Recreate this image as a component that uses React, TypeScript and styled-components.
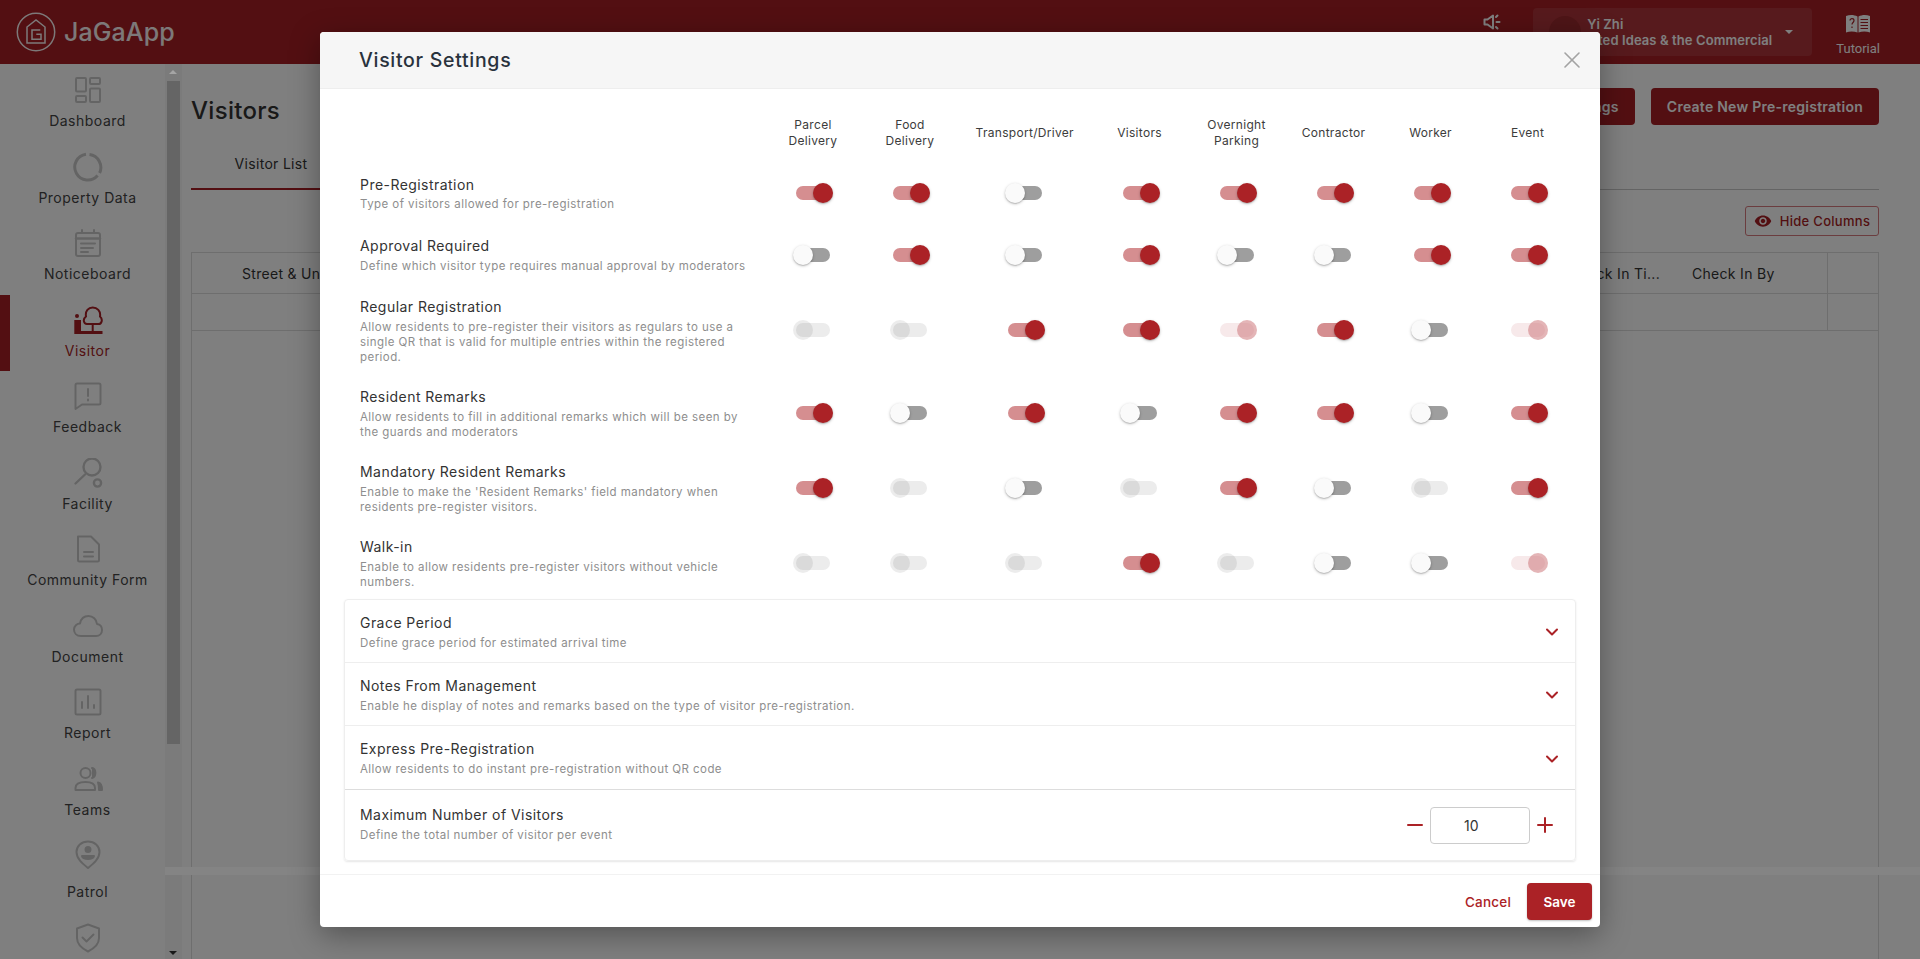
import React from "react";
import styled, { createGlobalStyle } from "styled-components";
import { ChevronDown, X, Minus, Plus } from "lucide-react";
import { MdVisibility } from "react-icons/md";

const GlobalStyle = createGlobalStyle`
  html, body {
    margin: 0;
    height: 100%;
    overflow: hidden;
    background: #fff;
    font-family: "Inter", "Liberation Sans", sans-serif;
  }
  * { box-sizing: border-box; }
`;

const Page = styled.div`
  position: relative;
  width: 1920px;
  height: 959px;
  overflow: hidden;
  display: flex;
  flex-direction: column;
`;

const Header = styled.header`
  height: 64px;
  flex: none;
  background: #a61e24;
  display: flex;
  align-items: center;
  padding: 0 40px 0 16px;
`;

const Logo = styled.div`
  display: flex;
  align-items: center;
  gap: 8px;
  font-size: 25px;
  font-weight: 500;
  color: #fff;
  letter-spacing: 0.1px;
  flex: 1;
  opacity: 0.95;
`;

const Speaker = styled.div`
  margin-right: 32px;
  margin-bottom: 20px;
  display: flex;
  color: #fff;
`;

const UserBox = styled.div`
  width: 279px;
  height: 48px;
  margin-right: 24px;
  border-radius: 4px;
  background: rgba(255, 255, 255, 0.1);
  display: flex;
  align-items: center;
  padding: 0 16px;
  color: #fff;
`;

const Avatar = styled.div`
  width: 32px;
  height: 32px;
  border-radius: 50%;
  background: #9c2a2e;
  flex: none;
`;

const UserText = styled.div`
  margin-left: 6px;
  width: 185px;
  font-size: 13px;
  line-height: 16px;
  font-weight: 600;
  letter-spacing: 0.1px;
`;

const OrgLine = styled.div`
  white-space: nowrap;
  display: flex;
  justify-content: flex-end;
`;

const Caret = styled.div`
  margin-left: 13px;
  width: 0;
  height: 0;
  border-left: 4px solid transparent;
  border-right: 4px solid transparent;
  border-top: 4px solid #fff;
`;

const TutorialBox = styled.div`
  display: flex;
  flex-direction: column;
  align-items: center;
  gap: 7px;
  margin-top: 6px;
  color: #fff;
  font-size: 13px;
  line-height: 15px;
  font-family: "Roboto", sans-serif;
`;

const Body = styled.div`
  flex: 1;
  display: flex;
  min-height: 0;
`;

const Sidebar = styled.nav`
  width: 165px;
  flex: none;
  overflow: hidden;
  display: flex;
  flex-direction: column;
  padding: 11px 0 0 10px;
`;

const NavItem = styled.div<{ $active?: boolean; $tall?: boolean }>`
  position: relative;
  height: ${(p) => (p.$tall ? "83px" : "76.5px")};
  flex: none;
  display: flex;
  flex-direction: column;
  align-items: center;
  justify-content: flex-start;
  color: ${(p) => (p.$active ? "#a61e24" : "#444")};
  font-size: 14px;
  line-height: 18px;
  letter-spacing: 0.5px;
  white-space: nowrap;

  svg {
    color: ${(p) => (p.$active ? "#a61e24" : "#c9c9c9")};
    flex: none;
    margin-bottom: ${(p) => (p.$tall ? "13px" : "7px")};
  }

  ${(p) =>
    p.$active &&
    `&::before {
      content: "";
      position: absolute;
      left: -10px;
      top: -10px;
      width: 10px;
      height: 76px;
      background: #a61e24;
    }`}
`;

const Scrollbar = styled.div`
  position: relative;
  width: 17px;
  flex: none;
  background: #f7f7f7;
`;

const ScrollThumb = styled.div`
  margin: 17px 2px 0;
  height: 663px;
  background: #cacaca;
`;

const ArrowUp = styled.div`
  position: absolute;
  z-index: 1;
  top: 6px;
  left: 4px;
  border-left: 4px solid transparent;
  border-right: 4px solid transparent;
  border-bottom: 4px solid #a5a5a5;
`;

const ArrowDown = styled.div`
  position: absolute;
  bottom: 4px;
  left: 4px;
  border-left: 4px solid transparent;
  border-right: 4px solid transparent;
  border-top: 4px solid #333;
`;

const Main = styled.main`
  flex: 1;
  position: relative;
  padding: 24px 41px 0 9px;
  display: flex;
  flex-direction: column;
`;

const TitleRow = styled.div`
  display: flex;
  align-items: flex-start;
  height: 53px;
  flex: none;
  gap: 16px;
`;

const PageTitle = styled.h1`
  margin: 5px auto 0 0;
  font-size: 24px;
  line-height: 36px;
  font-weight: 500;
  color: #333;
  letter-spacing: 0.3px;
`;

const PrimaryButton = styled.button`
  height: 37px;
  border: 0;
  border-radius: 4px;
  background: #a61e24;
  color: #fff;
  font: 600 14px "Inter", sans-serif;
  letter-spacing: 0.25px;
  padding: 0 16px;
`;

const Tabs = styled.div`
  height: 49px;
  flex: none;
  display: flex;
  border-bottom: 1px solid #c8c8c8;
`;

const Tab = styled.div`
  width: 160px;
  height: 49px;
  padding-top: 14px;
  text-align: center;
  font-size: 14px;
  line-height: 18px;
  letter-spacing: 0.3px;
  color: #333;
  border-bottom: 2px solid #a61e24;
`;

const TableTools = styled.div`
  height: 62px;
  flex: none;
  padding-top: 16px;
  display: flex;
  justify-content: flex-end;
`;

const HideColumns = styled.button`
  width: 134px;
  height: 30px;
  border: 1px solid #d77a7e;
  border-radius: 3px;
  background: transparent;
  color: #a61e24;
  font: 500 13px "Inter", sans-serif;
  letter-spacing: 0.3px;
  display: flex;
  align-items: center;
  justify-content: center;
  gap: 8px;
  padding: 0;
`;

const Table = styled.div`
  flex: 1;
  border: 1px solid #dcdcdc;
  border-bottom: 0;
  display: flex;
  flex-direction: column;
`;

const TableHead = styled.div`
  height: 41px;
  flex: none;
  display: flex;
  align-items: center;
  border-bottom: 1px solid #dcdcdc;
  font-size: 14px;
  letter-spacing: 0.3px;
  color: #333;
`;

const HeadCell = styled.div<{ $width: number }>`
  flex: none;
  width: ${(p) => p.$width}px;
  padding-left: 50px;
  white-space: nowrap;
`;

const TableEnd = styled.div`
  margin-left: auto;
  width: 51px;
  height: 100%;
  border-left: 1px solid #dcdcdc;
`;

const TableEmpty = styled.div`
  height: 37px;
  flex: none;
  border-bottom: 1px solid #dcdcdc;
  display: flex;
  justify-content: flex-end;
`;

const Overlay = styled.div`
  position: absolute;
  inset: 0;
  background: rgba(0, 0, 0, 0.5);
`;

const ScrollBand = styled.div`
  position: absolute;
  left: 165px;
  right: 0;
  bottom: 84px;
  height: 8px;
  background: #848484;
`;

const Modal = styled.section`
  position: absolute;
  left: 320px;
  top: 32px;
  width: 1280px;
  height: 895px;
  background: #fff;
  border-radius: 4px;
  display: flex;
  flex-direction: column;
  overflow: hidden;
  box-shadow: 0 8px 30px rgba(0, 0, 0, 0.35);
  color: #333;
`;

const ModalHeader = styled.div`
  height: 57px;
  flex: none;
  background: #f6f6f6;
  border-bottom: 1px solid #eee;
  display: flex;
  align-items: center;
  justify-content: space-between;
  padding: 0 14px 0 39px;
  color: #a3a3a3;
`;

const ModalTitle = styled.h2`
  margin: 0;
  font-size: 19.5px;
  font-weight: 500;
  letter-spacing: 0.7px;
  color: #29323d;
`;

const ModalBody = styled.div`
  flex: 1;
  padding: 28px 24px 0;
  min-height: 0;
`;

const Grid = styled.div`
  display: grid;
  grid-template-columns: 404.5px 97px 97px 132.5px repeat(5, 97px);
  align-items: center;
  padding-left: 16px;
`;

const HeaderGrid = styled(Grid)`
  height: 45.5px;
  padding-bottom: 13.5px;
`;

const ColName = styled.div`
  font-size: 12px;
  line-height: 16px;
  text-align: center;
  letter-spacing: 0.3px;
  color: #3c3c3c;
  white-space: pre-line;
`;

const Row = styled(Grid)`
  min-height: 61.5px;
  padding-top: 11.5px;
  padding-bottom: 11px;
`;

const Title = styled.div`
  font-size: 14px;
  line-height: 20px;
  letter-spacing: 0.45px;
  color: #333;
`;

const Desc = styled.div<{ $wide?: boolean }>`
  margin-top: ${(p) => (p.$wide ? "3px" : "2.5px")};
  max-width: ${(p) => (p.$wide ? "none" : "392px")};
  font-size: 11.5px;
  line-height: 15px;
  letter-spacing: 0.44px;
  color: #8e8e8e;
`;

const Cell = styled.div`
  display: flex;
  justify-content: center;
  margin-top: -1px;
`;

type SwitchState = "on" | "off" | "onDisabled" | "offDisabled";

const trackColors: Record<SwitchState, string> = {
  on: "#d58e90",
  off: "#9e9e9e",
  onDisabled: "#f7e9ea",
  offDisabled: "#ececec",
};

const thumbColors: Record<SwitchState, string> = {
  on: "#ab2226",
  off: "#fafafa",
  onDisabled: "rgba(205, 120, 124, 0.55)",
  offDisabled: "rgba(0, 0, 0, 0.075)",
};

const Track = styled.div<{ $state: SwitchState }>`
  position: relative;
  width: 34px;
  height: 14px;
  border-radius: 7px;
  background: ${(p) => trackColors[p.$state]};
`;

const Thumb = styled.div<{ $state: SwitchState }>`
  position: absolute;
  top: -3px;
  left: ${(p) => (p.$state === "on" || p.$state === "onDisabled" ? "17px" : "-3px")};
  width: 20px;
  height: 20px;
  border-radius: 50%;
  background: ${(p) => thumbColors[p.$state]};
  box-shadow: ${(p) =>
    p.$state === "on" || p.$state === "off"
      ? "0 1px 3px rgba(0, 0, 0, 0.25), 0 1px 1px rgba(0, 0, 0, 0.12)"
      : "none"};
`;

const Card = styled.div`
  margin-top: -1.5px;
  border: 1px solid #eee;
  border-radius: 4px;
  box-shadow: 0 1px 2px rgba(0, 0, 0, 0.1);
  display: flex;
  flex-direction: column;
`;

const Accordion = styled.div<{ $last?: boolean }>`
  height: ${(p) => (p.$last ? "64px" : "63px")};
  flex: none;
  padding: 0 13px 0 15px;
  display: flex;
  align-items: center;
  justify-content: space-between;
  border-bottom: 1px solid ${(p) => (p.$last ? "#ddd" : "#eee")};
  color: #ab2226;

  svg {
    margin-top: 2px;
  }
`;

const AccordionText = styled.div`
  align-self: flex-start;
  padding-top: 13px;
`;

const MaxRow = styled.div`
  height: 70px;
  flex: none;
  padding: 0 18px 0 15px;
  display: flex;
  align-items: center;
  justify-content: space-between;
`;

const MaxText = styled.div`
  margin-top: -2px;
`;

const Stepper = styled.div`
  display: flex;
  align-items: center;
  gap: 3px;
  color: #ab2226;
`;

const NumberBox = styled.div`
  width: 100px;
  height: 37px;
  border: 1px solid #ccc;
  border-radius: 4px;
  display: flex;
  align-items: center;
  padding-left: 33px;
  font-size: 14px;
  color: #333;
`;

const Footer = styled.div`
  height: 53px;
  flex: none;
  border-top: 1px solid #f2f2f2;
  display: flex;
  align-items: center;
  justify-content: flex-end;
  gap: 16px;
  padding: 1px 8px 0;
`;

const CancelButton = styled.button`
  border: 0;
  background: transparent;
  color: #ab2226;
  font: 500 13.5px "Inter", sans-serif;
  letter-spacing: 0.2px;
  padding: 0;
`;

const SaveButton = styled.button`
  width: 65px;
  height: 37px;
  border: 0;
  border-radius: 4px;
  background: #ab2226;
  color: #fff;
  font: 600 13.5px "Inter", sans-serif;
  padding: 0;
  box-shadow: 0 1px 2px rgba(0, 0, 0, 0.25);
`;

const LogoMark = () => (
  <svg width="40" height="40" viewBox="0 0 40 40" fill="none" stroke="currentColor" strokeWidth="1.5">
    <circle cx="20" cy="20" r="18.7" />
    <path d="M11 15 L20 8 L29 15 V31 H11 Z" />
    <path d="M24.3 18 H16 V27.3 H25 V22.3 H20.3" />
  </svg>
);

const SpeakerIcon = () => (
  <svg width="18" height="18" viewBox="0 0 18 18" fill="none" stroke="currentColor" strokeWidth="2">
    <path d="M1.5 6.5 H4.5 L10 2.5 V15.5 L4.5 11.5 H1.5 Z" strokeLinejoin="round" />
    <path d="M13 4 L14.5 2.5 M13.5 9 H16.5 M13 14 L14.5 15.5" strokeLinecap="round" />
  </svg>
);

const BookIcon = () => (
  <svg width="26" height="20" viewBox="0 0 26 20" fill="currentColor">
    <path d="M1 2 C4.5 .5 9 .5 12.5 2.5 V18.5 C9 17 4.5 17 1 18.5 Z M13.5 2.5 C17 .5 21.5 .5 25 2 V18.5 C21.5 17 17 17 13.5 18.5 Z" />
    <g stroke="#a61e24" strokeWidth="1.2" fill="none">
      <path d="M15.5 5.5 H23 M15.5 8.5 H23 M15.5 11.5 H23 M15.5 14.5 H23" />
      <path d="M5 6.5 C5 4 9 4 9 6.5 C9 8.5 7 8.5 7 10.5 M7 12.5 V14" />
    </g>
  </svg>
);

const iconProps = {
  width: 30,
  height: 30,
  viewBox: "0 0 30 30",
  fill: "none",
  stroke: "currentColor",
  strokeWidth: 2,
  strokeLinejoin: "round" as const,
  strokeLinecap: "round" as const,
};

const DashboardIcon = () => (
  <svg {...iconProps}>
    <rect x="3" y="3" width="10" height="13.5" rx="1" />
    <rect x="17" y="3" width="10" height="6" rx="1" />
    <rect x="3" y="21" width="10" height="6" rx="1" />
    <rect x="17" y="13.5" width="10" height="13.5" rx="1" />
  </svg>
);

const PropertyIcon = () => (
  <svg {...iconProps} strokeWidth={3} strokeLinecap="butt">
    <path d="M16.5 2.6 A13 13 0 0 1 26.6 21" />
    <path d="M24.6 23.6 A13 13 0 1 1 13 2.2" />
  </svg>
);

const NoticeIcon = () => (
  <svg {...iconProps}>
    <rect x="3" y="5" width="24" height="23" rx="2" />
    <path d="M3 10.5 H27" strokeWidth={2.4} />
    <path d="M9 2 V5 M21 2 V5" />
    <path d="M8 15.5 H22 M8 20 H20 M8 24 H15" />
  </svg>
);

const VisitorIcon = () => (
  <svg {...iconProps}>
    <path d="M14 19 H25.5 C29 19 30 14 27 11.5 C28 6 24 2.5 19.7 2.5 C15.5 2.5 12 6 13 11.5 C9.5 14 10.5 19 14 19 Z" />
    <path d="M19.7 19 V27" />
    <circle cx="4" cy="11" r="2" fill="currentColor" stroke="none" />
    <path d="M1.3 15 H8 V26 H29.5 V29 H1.3 Z" fill="currentColor" stroke="none" />
  </svg>
);

const FeedbackIcon = () => (
  <svg {...iconProps}>
    <path d="M4 2.5 H26 A1.5 1.5 0 0 1 27.5 4 V22 A1.5 1.5 0 0 1 26 23.5 H9 L2.5 28 V4 A1.5 1.5 0 0 1 4 2.5 Z" />
    <path d="M15 8 V15 M15 18.5 V19.5" />
  </svg>
);

const FacilityIcon = () => (
  <svg {...iconProps} strokeWidth={2.4}>
    <circle cx="19" cy="9" r="8.5" />
    <path d="M12 16.5 L2.5 25.5" />
    <circle cx="24.5" cy="25" r="3.6" />
  </svg>
);

const FormIcon = () => (
  <svg {...iconProps}>
    <path d="M5 2.5 H18 L26 10.5 V26 A1.5 1.5 0 0 1 24.5 27.5 H6.5 A1.5 1.5 0 0 1 5 26 Z" />
    <path d="M11 18 H20 M11 22.5 H20" />
  </svg>
);

const CloudIcon = () => (
  <svg {...iconProps}>
    <path d="M8 25 C3.5 25 1 22 1 18.5 C1 15 4 12.5 7 12.5 C8 7.5 11.5 5 15.5 5 C20 5 23.5 8.5 24 13 C27 13.5 29 16 29 19 C29 22.5 26.5 25 23 25 Z" />
  </svg>
);

const ReportIcon = () => (
  <svg {...iconProps}>
    <rect x="2.5" y="2.5" width="25" height="25" rx="1.5" />
    <path d="M9 21 V15 M15 21 V9 M21 21 V18" />
  </svg>
);

const TeamsIcon = () => (
  <svg {...iconProps}>
    <circle cx="12.5" cy="9" r="5" />
    <path d="M2.5 24 C2.5 19.5 7.5 18 12.5 18 C17.5 18 22 19.5 22 24 V26 H2.5 Z" />
    <path d="M19 4 C23.5 4.5 23.5 13 19 14" fill="currentColor" />
    <path d="M25 18.5 C28 19 29 21.5 29 26 H26 C26 23 26 21 25 18.5 Z" fill="currentColor" />
  </svg>
);

const PatrolIcon = () => (
  <svg {...iconProps}>
    <path d="M15 28 C10 24 3.5 19 3.5 12 C3.5 6 8.5 1.5 15 1.5 C21.5 1.5 26.5 6 26.5 12 C26.5 19 20 24 15 28 Z" />
    <circle cx="15" cy="9.5" r="2.5" fill="currentColor" />
    <path d="M9 16 H21 C20 20 10 20 9 16 Z" fill="currentColor" />
  </svg>
);

const ShieldIcon = () => (
  <svg {...iconProps}>
    <path d="M15 1.5 L26 5.5 V15 C26 21 20 26 15 28.5 C10 26 4 21 4 15 V5.5 Z" />
    <path d="M9.5 14.5 L13.5 18.5 L20.5 11.5" />
  </svg>
);

const navItems = [
  { label: "Dashboard", Icon: DashboardIcon },
  { label: "Property Data", Icon: PropertyIcon },
  { label: "Noticeboard", Icon: NoticeIcon },
  { label: "Visitor", Icon: VisitorIcon, active: true },
  { label: "Feedback", Icon: FeedbackIcon },
  { label: "Facility", Icon: FacilityIcon },
  { label: "Community Form", Icon: FormIcon },
  { label: "Document", Icon: CloudIcon },
  { label: "Report", Icon: ReportIcon },
  { label: "Teams", Icon: TeamsIcon },
  { label: "Patrol", Icon: PatrolIcon, tall: true },
  { label: "", Icon: ShieldIcon },
];

const columns = [
  "Parcel\nDelivery",
  "Food\nDelivery",
  "Transport/Driver",
  "Visitors",
  "Overnight\nParking",
  "Contractor",
  "Worker",
  "Event",
];

const on: SwitchState = "on";
const of: SwitchState = "off";
const nd: SwitchState = "onDisabled";
const fd: SwitchState = "offDisabled";

const rows: { title: string; desc: string; states: SwitchState[] }[] = [
  {
    title: "Pre-Registration",
    desc: "Type of visitors allowed for pre-registration",
    states: [on, on, of, on, on, on, on, on],
  },
  {
    title: "Approval Required",
    desc: "Define which visitor type requires manual approval by moderators",
    states: [of, on, of, on, of, of, on, on],
  },
  {
    title: "Regular Registration",
    desc: "Allow residents to pre-register their visitors as regulars to use a single QR that is valid for multiple entries within the registered period.",
    states: [fd, fd, on, on, nd, on, of, nd],
  },
  {
    title: "Resident Remarks",
    desc: "Allow residents to fill in additional remarks which will be seen by the guards and moderators",
    states: [on, of, on, of, on, on, of, on],
  },
  {
    title: "Mandatory Resident Remarks",
    desc: "Enable to make the 'Resident Remarks' field mandatory when residents pre-register visitors.",
    states: [on, fd, of, fd, on, of, fd, on],
  },
  {
    title: "Walk-in",
    desc: "Enable to allow residents pre-register visitors without vehicle numbers.",
    states: [fd, fd, fd, on, fd, of, of, nd],
  },
];

const accordions = [
  { title: "Grace Period", desc: "Define grace period for estimated arrival time" },
  {
    title: "Notes From Management",
    desc: "Enable he display of notes and remarks based on the type of visitor pre-registration.",
  },
  { title: "Express Pre-Registration", desc: "Allow residents to do instant pre-registration without QR code" },
];

export default function App() {
  return (
    <Page>
      <GlobalStyle />
      <Header>
        <Logo>
          <LogoMark />
          JaGaApp
        </Logo>
        <Speaker>
          <SpeakerIcon />
        </Speaker>
        <UserBox>
          <Avatar />
          <UserText>
            Yi Zhi
            <OrgLine>Integrated Ideas &amp; the Commercial</OrgLine>
          </UserText>
          <Caret />
        </UserBox>
        <TutorialBox>
          <BookIcon />
          Tutorial
        </TutorialBox>
      </Header>
      <Body>
        <Sidebar>
          {navItems.map(({ label, Icon, active, tall }) => (
            <NavItem key={label || "last"} $active={active} $tall={tall}>
              <Icon />
              {label}
            </NavItem>
          ))}
        </Sidebar>
        <Scrollbar>
          <ArrowUp />
          <ScrollThumb />
          <ArrowDown />
        </Scrollbar>
        <Main>
          <TitleRow>
            <PageTitle>Visitors</PageTitle>
            <PrimaryButton>Visitor Settings</PrimaryButton>
            <PrimaryButton>Create New Pre-registration</PrimaryButton>
          </TitleRow>
          <Tabs>
            <Tab>Visitor List</Tab>
          </Tabs>
          <TableTools>
            <HideColumns>
              <MdVisibility size={18} />
              Hide Columns
            </HideColumns>
          </TableTools>
          <Table>
            <TableHead>
              <HeadCell $width={1327}>Street &amp; Unit</HeadCell>
              <HeadCell $width={123}>Check In Ti...</HeadCell>
              <HeadCell $width={150}>Check In By</HeadCell>
              <TableEnd />
            </TableHead>
            <TableEmpty>
              <TableEnd />
            </TableEmpty>
          </Table>
        </Main>
      </Body>
      <Overlay />
      <ScrollBand />
      <Modal>
        <ModalHeader>
          <ModalTitle>Visitor Settings</ModalTitle>
          <X size={28} strokeWidth={1.4} />
        </ModalHeader>
        <ModalBody>
          <HeaderGrid>
            <div />
            {columns.map((c) => (
              <ColName key={c}>{c}</ColName>
            ))}
          </HeaderGrid>
          {rows.map((r) => (
            <Row key={r.title}>
              <div>
                <Title>{r.title}</Title>
                <Desc>{r.desc}</Desc>
              </div>
              {r.states.map((s, i) => (
                <Cell key={i}>
                  <Track $state={s}>
                    <Thumb $state={s} />
                  </Track>
                </Cell>
              ))}
            </Row>
          ))}
          <Card>
            {accordions.map((a, i) => (
              <Accordion key={a.title} $last={i === accordions.length - 1}>
                <AccordionText>
                  <Title>{a.title}</Title>
                  <Desc $wide>{a.desc}</Desc>
                </AccordionText>
                <ChevronDown size={20} strokeWidth={2.4} />
              </Accordion>
            ))}
            <MaxRow>
              <MaxText>
                <Title>Maximum Number of Visitors</Title>
                <Desc>Define the total number of visitor per event</Desc>
              </MaxText>
              <Stepper>
                <Minus size={24} strokeWidth={2} />
                <NumberBox>10</NumberBox>
                <Plus size={24} strokeWidth={2} />
              </Stepper>
            </MaxRow>
          </Card>
        </ModalBody>
        <Footer>
          <CancelButton>Cancel</CancelButton>
          <SaveButton>Save</SaveButton>
        </Footer>
      </Modal>
    </Page>
  );
}
